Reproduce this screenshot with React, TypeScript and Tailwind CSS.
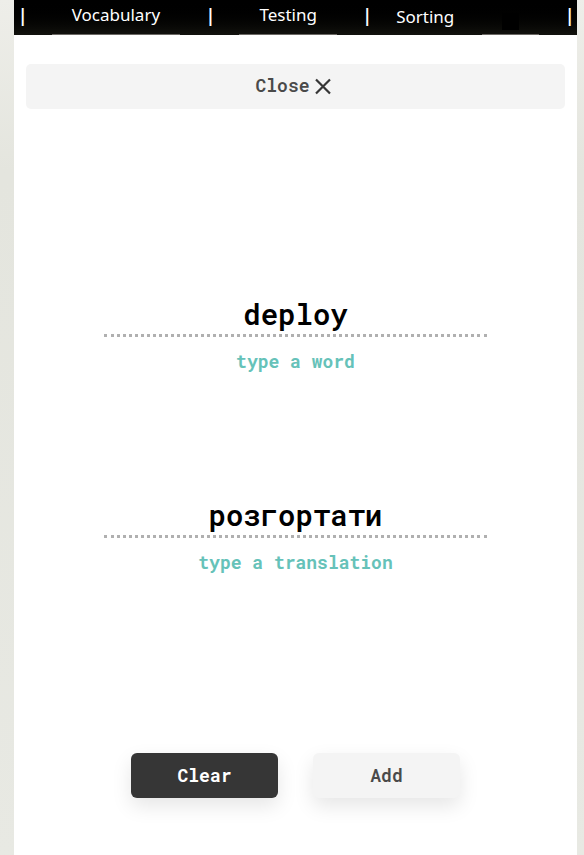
import { useState } from 'react';

const mono = "font-['Roboto_Mono','Liberation_Mono',monospace]";

function Divider() {
  return <span aria-hidden="true" className="w-2 pb-1 text-center font-bold">|</span>;
}

function NavBar() {
  const tab = 'h-full border-b border-[#6b6864] px-5 pb-1';
  return (
    <nav className="flex h-[35px] items-center justify-between bg-linear-to-b from-black to-[#12120e] px-1 font-['Segoe_UI','Noto_Sans',sans-serif] text-[17px] leading-6 text-white">
      <Divider />
      <button type="button" className={tab}>Vocabulary</button>
      <Divider />
      <button type="button" className={tab}>Testing</button>
      <Divider />
      <div className="flex h-full items-center gap-7">
        <button type="button" className="pb-0.5">Sorting</button>
        <button type="button" aria-label="Theme" className="flex h-full items-center border-b border-[#6b6864] px-5 pt-2">
          <span className="size-[17px] bg-black" />
        </button>
      </div>
      <Divider />
    </nav>
  );
}

type FieldProps = { id: string; label: string; value: string; onChange: (value: string) => void };

function Field({ id, label, value, onChange }: FieldProps) {
  return (
    <div className="flex w-full flex-col items-center">
      <input
        id={id}
        value={value}
        onChange={(e) => onChange(e.target.value)}
        className="h-[42px] w-full border-b-3 border-dotted border-[#b0b0b0] bg-transparent text-center text-[29px] font-semibold text-black outline-none"
      />
      <label htmlFor={id} className="mt-3 text-[18px] leading-6 font-bold text-[#66c2b9]">{label}</label>
    </div>
  );
}

export default function App() {
  const [word, setWord] = useState('deploy');
  const [translation, setTranslation] = useState('розгортати');
  const action = 'h-[45px] w-[147px] rounded-md text-[18px] shadow-[0_8px_20px_rgba(0,0,0,0.1)]';

  return (
    <div className="min-h-screen bg-linear-to-b from-[#eeeee9] via-[#e4e5de] via-20% to-[#e8e9e3] pr-[7px] pl-[14px]">
      <div className="flex min-h-screen flex-col bg-white">
        <NavBar />
        <main className={`flex flex-1 flex-col px-3 pt-[29px] ${mono}`}>
          <button type="button" className="flex h-[45px] w-full items-center justify-center gap-1 rounded-[5px] bg-[#f4f4f4] pr-2 pb-0.5 pl-1 text-[18px] font-semibold text-[#4a4a4a]">
            Close
            <svg viewBox="0 0 18 18" className="size-[18px]" fill="none" stroke="#363636" strokeWidth="2.2" aria-hidden="true">
              <path d="M2 2.5 16 16.5M16 2.5 2 16.5" />
            </svg>
          </button>
          <form className="flex flex-col items-center" onSubmit={(e) => e.preventDefault()}>
            <div className="mt-[186px] flex w-[71%] flex-col gap-[123px]">
              <Field id="word" label="type a word" value={word} onChange={setWord} />
              <Field id="translation" label="type a translation" value={translation} onChange={setTranslation} />
            </div>
            <div className="mt-[179px] flex gap-[35px]">
              <button type="button" onClick={() => { setWord(''); setTranslation(''); }} className={`${action} bg-[#363636] font-bold text-white`}>Clear</button>
              <button type="submit" className={`${action} bg-[#f4f4f4] font-semibold text-[#4a4a4a]`}>Add</button>
            </div>
          </form>
        </main>
      </div>
    </div>
  );
}
